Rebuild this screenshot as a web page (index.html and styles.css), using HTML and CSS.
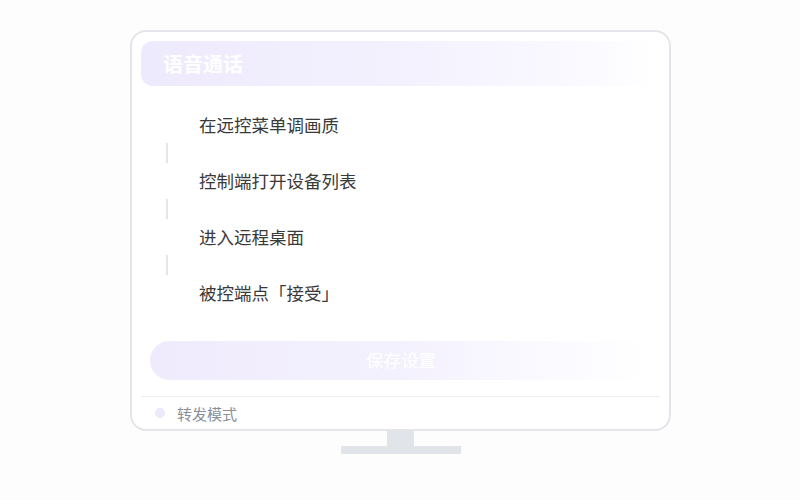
FILE: index.html
```html
<!DOCTYPE html>
<html lang="zh-CN">
<head>
<meta charset="utf-8">
<link rel="stylesheet" href="styles.css">
</head>
<body>
<div class="device">
  <div class="monitor">
    <div class="header"><span class="title">语音通话</span></div>
    <div class="steps">
      <div class="step">在远控菜单调画质</div>
      <div class="link"><span class="bar"></span></div>
      <div class="step">控制端打开设备列表</div>
      <div class="link"><span class="bar"></span></div>
      <div class="step">进入远程桌面</div>
      <div class="link"><span class="bar"></span></div>
      <div class="step">被控端点「接受」</div>
    </div>
    <div class="save">保存设置</div>
    <div class="divider"></div>
    <div class="footer"><span class="dot"></span><span class="mode">转发模式</span></div>
  </div>
  <div class="neck"></div>
  <div class="base"></div>
</div>
</body>
</html>
```
FILE: styles.css
```css
html, body {
  margin: 0;
  padding: 0;
  background: #fdfdfd;
  font-family: "Noto Sans CJK SC", "Noto Sans", sans-serif;
}
.device {
  width: 541px;
  margin: 30px 0 0 130px;
  display: flex;
  flex-direction: column;
  align-items: center;
}
.monitor {
  width: 541px;
  box-sizing: border-box;
  border: 2px solid #e3e5ea;
  border-radius: 16px;
  background: #ffffff;
  padding: 9px 9px 0 9px;
}
.header {
  height: 45px;
  border-radius: 12px;
  background: linear-gradient(to right, #eeeafd 0%, #f3f0fe 45%, #f9f8ff 80%, #ffffff 100%);
  display: flex;
  align-items: center;
  padding-left: 22px;
}
.title {
  color: #ffffff;
  font-size: 20px;
  font-weight: 700;
  line-height: 24px;
}
.steps {
  margin-top: 27px;
  padding-left: 25px;
  display: flex;
  flex-direction: column;
}
.step {
  height: 24px;
  line-height: 24px;
  padding-left: 33px;
  font-size: 17.5px;
  color: #3a3a3a;
  white-space: nowrap;
}
.link {
  height: 32px;
  display: flex;
  align-items: center;
}
.bar {
  display: block;
  width: 2px;
  height: 20px;
  background: #e4e4ec;
}
.save {
  margin: 36px 0 0 9px;
  width: 502px;
  height: 39px;
  border-radius: 20px;
  background: linear-gradient(to right, #efebfd 0%, #f4f1fe 50%, #fbfaff 80%, #ffffff 100%);
  color: #ffffff;
  font-size: 17.5px;
  line-height: 24px;
  display: flex;
  align-items: center;
  justify-content: center;
  padding-bottom: 2px;
  box-sizing: border-box;
}
.divider {
  margin-top: 16px;
  height: 1px;
  background: #eceef2;
}
.footer {
  height: 32px;
  display: flex;
  align-items: center;
  padding-left: 14px;
}
.dot {
  width: 10px;
  height: 10px;
  border-radius: 50%;
  background: #ece9fb;
}
.mode {
  margin-left: 12px;
  font-size: 15px;
  color: #8a8f99;
}
.neck {
  width: 27px;
  height: 15px;
  background: #e1e4e9;
}
.base {
  width: 120px;
  height: 8px;
  background: #e1e4e9;
}
```
